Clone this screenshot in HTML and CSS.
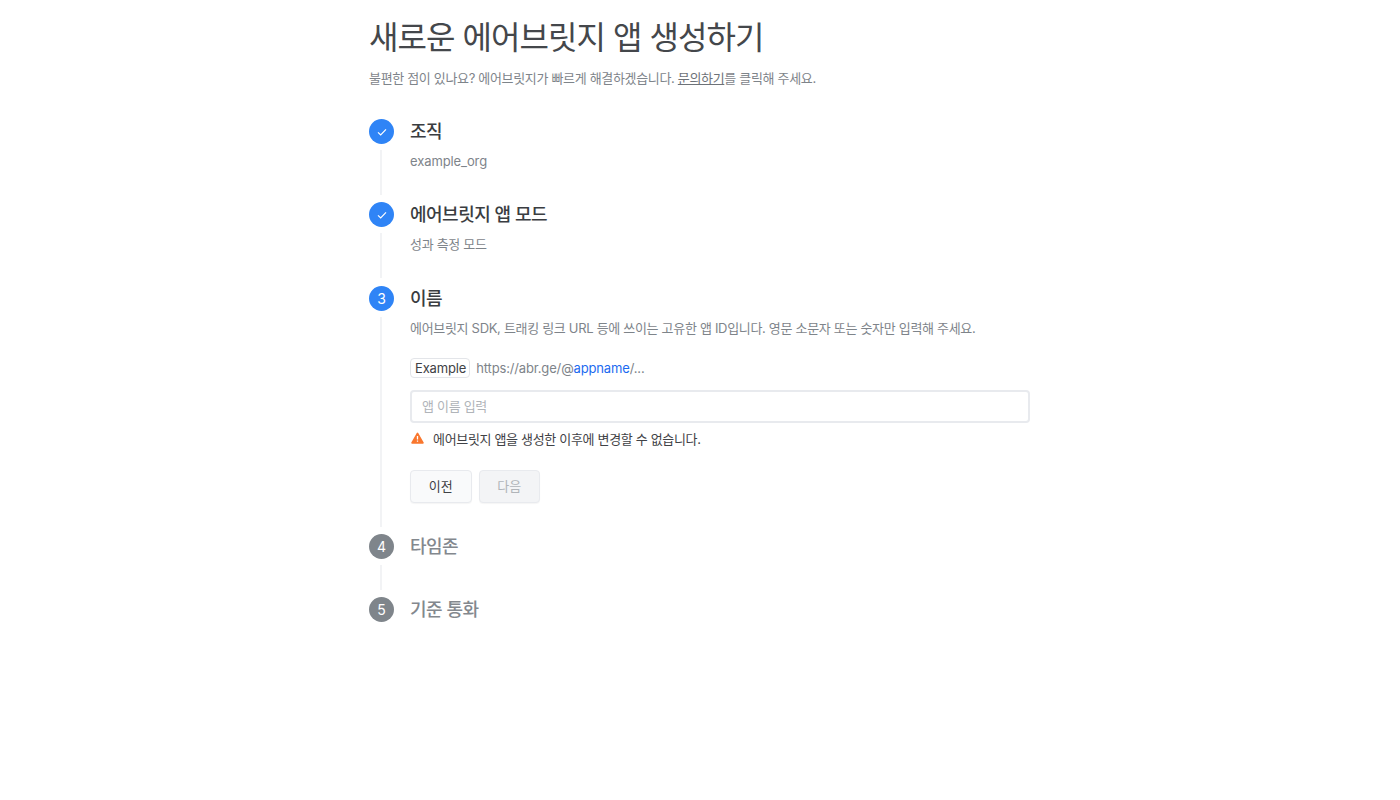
FILE: index.html
```html
<!DOCTYPE html>
<html lang="ko">
<head>
    <meta charset="UTF-8">
    <title>새로운 에어브릿지 앱 생성하기</title>
    <link rel="stylesheet" href="styles.css">
</head>
<body>
    <div class="page">
        <h1 class="page-title">새로운 에어브릿지 앱 생성하기</h1>
        <p class="page-desc">불편한 점이 있나요? 에어브릿지가 빠르게 해결하겠습니다. <a href="#" class="page-link">문의하기</a>를 클릭해 주세요.</p>

        <div class="steps">
            <div class="step step-done">
                <div class="rail">
                    <div class="badge badge-active">
                        <svg width="12" height="12" viewBox="0 0 12 12"><path d="M2 6.3l2.7 2.7L10 3.4" fill="none" stroke="#fff" stroke-width="1.2"/></svg>
                    </div>
                    <div class="rail-line"></div>
                </div>
                <div class="step-body">
                    <div class="step-title">조직</div>
                    <div class="step-value step-value-latin">example_org</div>
                </div>
            </div>

            <div class="step step-done">
                <div class="rail">
                    <div class="badge badge-active">
                        <svg width="12" height="12" viewBox="0 0 12 12"><path d="M2 6.3l2.7 2.7L10 3.4" fill="none" stroke="#fff" stroke-width="1.2"/></svg>
                    </div>
                    <div class="rail-line"></div>
                </div>
                <div class="step-body">
                    <div class="step-title">에어브릿지 앱 모드</div>
                    <div class="step-value">성과 측정 모드</div>
                </div>
            </div>

            <div class="step step-current">
                <div class="rail">
                    <div class="badge badge-active">3</div>
                    <div class="rail-line"></div>
                </div>
                <div class="step-body">
                    <div class="step-title">이름</div>
                    <div class="step-value">에어브릿지 SDK, 트래킹 링크 URL 등에 쓰이는 고유한 앱 ID입니다. 영문 소문자 또는 숫자만 입력해 주세요.</div>
                    <div class="example-row">
                        <span class="example-tag">Example</span>
                        <span class="example-url">https://abr.ge/@<span class="example-name">appname</span>/...</span>
                    </div>
                    <input type="text" class="name-input" placeholder="앱 이름 입력">
                    <div class="warning">
                        <svg class="warning-icon" width="13" height="12" viewBox="0 0 14 13"><path d="M7 .6a.9.9 0 0 1 .8.45l5.9 10.3a.9.9 0 0 1-.8 1.35H1.1a.9.9 0 0 1-.8-1.35L6.2 1.05A.9.9 0 0 1 7 .6z" fill="#f9772e"/><path d="M6.3 4.2h1.4v4H6.3zM6.3 9.2h1.4v1.4H6.3z" fill="#fff"/></svg>
                        <span>에어브릿지 앱을 생성한 이후에 변경할 수 없습니다.</span>
                    </div>
                    <div class="button-group">
                        <button class="btn">이전</button>
                        <button class="btn" disabled>다음</button>
                    </div>
                </div>
            </div>

            <div class="step step-todo">
                <div class="rail">
                    <div class="badge badge-muted">4</div>
                    <div class="rail-line"></div>
                </div>
                <div class="step-body">
                    <div class="step-title">타임존</div>
                </div>
            </div>

            <div class="step step-todo step-last">
                <div class="rail">
                    <div class="badge badge-muted">5</div>
                </div>
                <div class="step-body">
                    <div class="step-title">기준 통화</div>
                </div>
            </div>
        </div>
    </div>
</body>
</html>
```

FILE: styles.css
```css
* { margin: 0; padding: 0; box-sizing: border-box; }
body { background: #fff; color: #3f4246; font-family: Inter, 'Noto Sans CJK KR', sans-serif; }
.page { width: 662px; margin: 0 auto; padding-top: 14px; }
.page-title { font-size: 32px; font-weight: 400; line-height: 48px; letter-spacing: -0.95px; color: #44474b; }
.page-desc { font-size: 13px; line-height: 20px; margin-top: 6px; letter-spacing: -0.33px; color: #7e848a; }
.page-link { color: #6d7278; }

.steps { margin-top: 31px; }
.step { display: flex; gap: 16px; min-height: 83px; }
.step-current { margin-top: 1px; padding-bottom: 31px; }
.step-todo { min-height: 63px; }
.rail { display: flex; flex-direction: column; width: 25px; flex-shrink: 0; }
.step-current .rail { margin-bottom: -31px; }
.badge { display: flex; align-items: center; justify-content: center; width: 25px; height: 25px; border-radius: 50%; color: #fff; font-size: 14px; }
.badge-active { background: #2f84f6; }
.badge-muted { background: #7f858b; }
.rail-line { flex: 1; width: 2px; margin: 6px 0 7px 11px; background: #f2f3f5; }

.step-body { flex: 1; min-width: 0; }
.step-title { font-size: 18px; font-weight: 500; line-height: 25px; letter-spacing: -0.5px; color: #3a3d41; }
.step-todo .step-title { color: #83888e; }
.step-value { font-size: 13px; line-height: 20px; margin-top: 7px; letter-spacing: -0.31px; color: #7e848a; }
.step-value-latin { letter-spacing: -0.1px; }

.example-row { display: flex; align-items: center; gap: 6px; margin-top: 20px; font-size: 13px; letter-spacing: -0.15px; }
.example-tag { height: 20px; line-height: 18px; padding: 0 3px 0 4px; border: 1px solid #e3e5e9; border-radius: 4px; color: #3f4246; }
.example-url { color: #7e848a; }
.example-name { color: #1c6bf0; }

.name-input { display: block; width: 620px; height: 33px; margin-top: 12px; padding: 0 10px 2px; border: 2px solid #e8eaee; border-radius: 4px; font-family: inherit; font-size: 13px; letter-spacing: -0.3px; outline: none; }
.name-input::placeholder { color: #b0b4b9; }

.warning { display: flex; align-items: center; gap: 9px; margin-top: 5px; height: 20px; font-size: 13px; letter-spacing: -0.33px; color: #3f4246; }
.warning-icon { margin-left: 1px; }
.button-group { display: flex; gap: 7px; margin-top: 22px; }
.btn { width: 61.5px; height: 32.5px; padding-bottom: 2px; border: 1px solid #e8eaee; border-radius: 4px; background: #f9fafb; font-family: inherit; font-size: 13px; color: #3f4246; box-shadow: 0 1px 1px rgba(0,0,0,0.04); }
.btn[disabled] { background: #f3f4f6; color: #b0b4b9; }
```
